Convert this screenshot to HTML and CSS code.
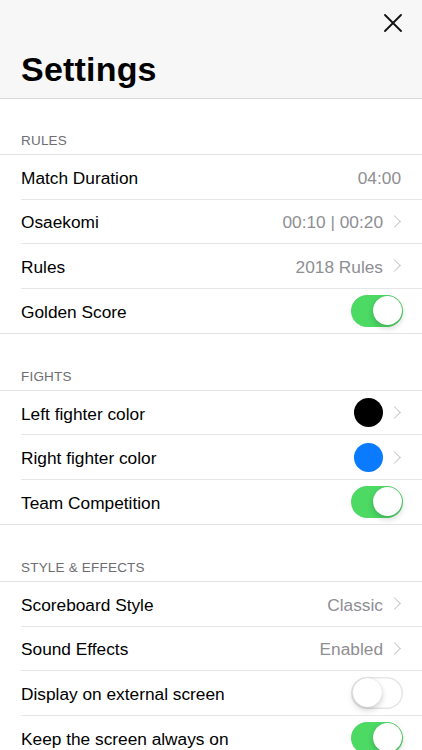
FILE: index.html
```html
<!DOCTYPE html>
<html>
<head>
<meta charset="utf-8">
<link rel="stylesheet" href="styles.css">
</head>
<body>
<div class="nav">
  <div class="nav-top">
    <svg class="close" width="18" height="18" viewBox="0 0 18 18"><path d="M1 1 L17 17 M17 1 L1 17" stroke="#111" stroke-width="1.8" stroke-linecap="round"/></svg>
  </div>
  <h1 class="title">Settings</h1>
</div>

<div class="group-head">RULES</div>
<div class="group">
  <div class="row"><span class="label">Match Duration</span><span class="value">04:00</span></div>
  <div class="row"><span class="label">Osaekomi</span><span class="value">00:10 | 00:20</span><span class="chev"></span></div>
  <div class="row"><span class="label">Rules</span><span class="value">2018 Rules</span><span class="chev"></span></div>
  <div class="row"><span class="label">Golden Score</span><span class="toggle on"><span class="knob"></span></span></div>
</div>

<div class="group-head">FIGHTS</div>
<div class="group">
  <div class="row"><span class="label">Left fighter color</span><span class="dot black"></span><span class="chev"></span></div>
  <div class="row"><span class="label">Right fighter color</span><span class="dot blue"></span><span class="chev"></span></div>
  <div class="row"><span class="label">Team Competition</span><span class="toggle on"><span class="knob"></span></span></div>
</div>

<div class="group-head">STYLE &amp; EFFECTS</div>
<div class="group">
  <div class="row"><span class="label">Scoreboard Style</span><span class="value">Classic</span><span class="chev"></span></div>
  <div class="row"><span class="label">Sound Effects</span><span class="value">Enabled</span><span class="chev"></span></div>
  <div class="row"><span class="label">Display on external screen</span><span class="toggle"><span class="knob"></span></span></div>
  <div class="row"><span class="label">Keep the screen always on</span><span class="toggle on"><span class="knob"></span></span></div>
</div>
</body>
</html>
```

FILE: styles.css
```css
* { box-sizing: border-box; }
html, body { margin: 0; padding: 0; }
body {
  width: 422px;
  height: 750px;
  overflow: hidden;
  background: #fff;
  font-family: "Liberation Sans", Arial, sans-serif;
  color: #000;
}
.nav {
  background: #f7f7f7;
  border-bottom: 1px solid #d9d9d9;
  height: 99px;
  padding: 0 21px;
}
.nav-top {
  height: 49px;
  display: flex;
  justify-content: flex-end;
  align-items: flex-start;
  padding-top: 14px;
}
.close { margin-right: -1px; }
.title {
  margin: 0;
  font-size: 34px;
  font-weight: 700;
  line-height: 41px;
  letter-spacing: 0.2px;
}
.group-head {
  height: 56px;
  padding: 0 21px 6px;
  display: flex;
  align-items: flex-end;
  font-size: 13.5px;
  color: #6d6d72;
  letter-spacing: 0.2px;
  border-bottom: 1px solid #e3e3e6;
}
.group + .group-head { height: 57px; }
.group {
  border-bottom: 1px solid #e3e3e6;
}
.row {
  height: 44.6px;
  margin-left: 21px;
  padding-right: 21px;
  display: flex;
  align-items: center;
  border-bottom: 1px solid #e6e6e9;
}
.row:last-child { border-bottom: none; height: 44px; }
.label {
  flex: 1;
  font-size: 17.3px;
  color: #000;
  padding-top: 3px;
}
.value {
  font-size: 17.3px;
  color: #8e8e93;
  padding-top: 3px;
}
.chev {
  width: 8px;
  height: 14px;
  margin-left: 10px;
  position: relative;
}
.chev::before {
  content: "";
  position: absolute;
  left: -3px;
  top: 2.5px;
  width: 8px;
  height: 8px;
  border-right: 1.8px solid #c7c7cc;
  border-top: 1.8px solid #c7c7cc;
  transform: rotate(45deg);
}
.dot {
  width: 29px;
  height: 29px;
  border-radius: 50%;
}
.dot.black { background: #000; }
.dot.blue { background: #0a7aff; }
.toggle {
  width: 52px;
  height: 32px;
  border-radius: 16px;
  background: #fff;
  box-shadow: inset 0 0 0 1.5px #e6e6e6;
  position: relative;
  margin-right: -2px;
}
.toggle.on { background: #4cd964; box-shadow: none; }
.knob {
  position: absolute;
  top: 1.5px;
  left: 1.5px;
  width: 29px;
  height: 29px;
  border-radius: 50%;
  background: #fff;
  box-shadow: 0 3px 6px rgba(0,0,0,0.18), 0 0 1px rgba(0,0,0,0.2);
}
.toggle.on .knob { left: 21.5px; }
```
